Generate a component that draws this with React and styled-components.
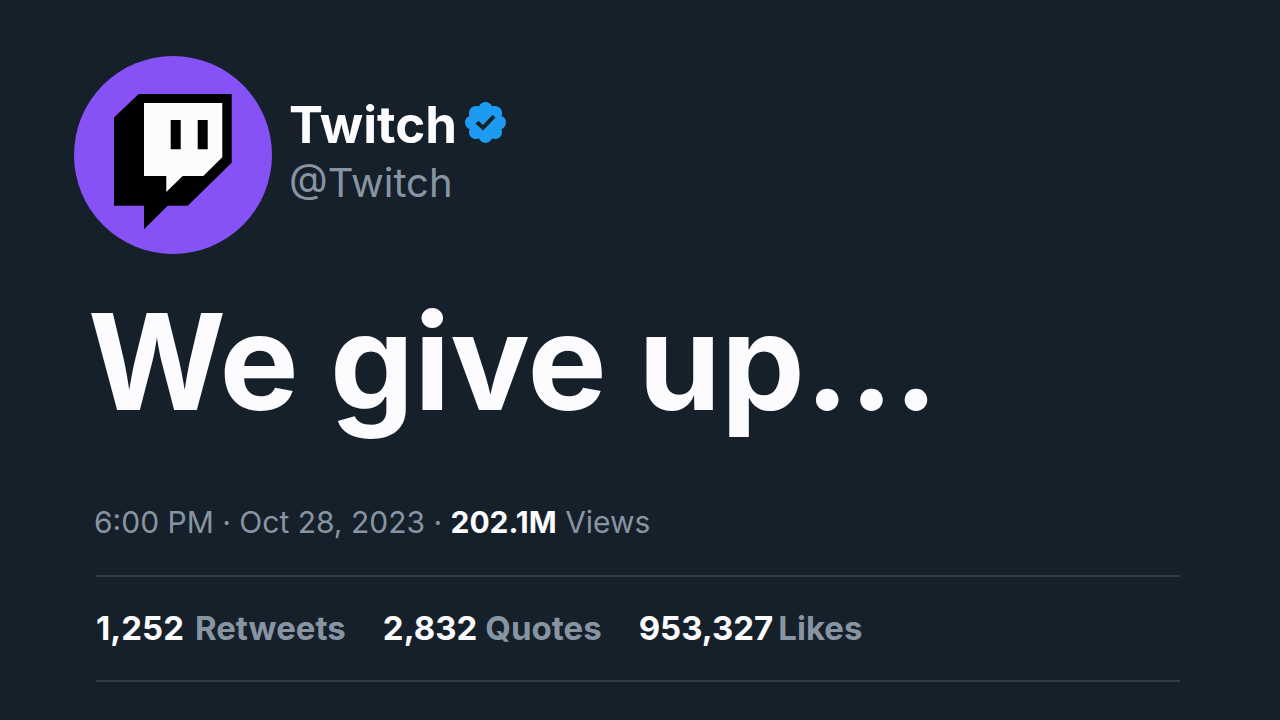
import styled, { createGlobalStyle } from "styled-components";

const GlobalStyle = createGlobalStyle`
    * {
        box-sizing: border-box;
    }
    body {
        margin: 0;
        background-color: #16202a;
        font-family: Inter, "Liberation Sans", sans-serif;
    }
`;

const Tweet = styled.article`
    display: flex;
    flex-direction: column;
    min-height: 100vh;
    padding: 56px 100px 38px 74px;
    color: #fcfbfe;
`;

const Header = styled.header`
    display: flex;
    align-items: flex-start;
    gap: 17px;
`;

const Avatar = styled.svg`
    flex: none;
    width: 198px;
    height: 198px;
`;

const Author = styled.div`
    display: flex;
    flex-direction: column;
    padding-top: 39px;
`;

const NameRow = styled.div`
    display: flex;
    align-items: center;
    gap: 8px;
`;

const Name = styled.h1`
    margin: 0;
    font-size: 51px;
    line-height: 60px;
    font-weight: 700;
`;

const Badge = styled.svg`
    width: 41px;
    height: 41px;
    margin-bottom: 6px;
    fill: #1d9bf0;
`;

const Handle = styled.a`
    font-size: 40px;
    line-height: 56px;
    color: #8795a3;
    text-decoration: none;
`;

const Message = styled.p`
    margin: 26px 0 0 14px;
    font-size: 133px;
    line-height: 164px;
    font-weight: 700;
`;

const Meta = styled.p`
    margin: 60px 0 0 20px;
    font-size: 30px;
    line-height: 36px;
    color: #8795a3;
    strong {
        font-weight: 700;
        color: #fcfbfe;
    }
`;

const Stats = styled.div`
    display: flex;
    align-items: center;
    gap: 37px;
    height: 107px;
    margin: 35px 0 0 22px;
    padding-bottom: 2px;
    border-top: 2px solid #2f3d47;
    border-bottom: 2px solid #2f3d47;
`;

const Stat = styled.div`
    display: flex;
    gap: ${(props) => props.$gap};
    font-size: 33px;
    line-height: 40px;
    font-weight: 700;
    span {
        color: #8795a3;
    }
`;

const stats = [
    { count: "1,252", label: "Retweets", gap: "11px" },
    { count: "2,832", label: "Quotes", gap: "8px" },
    { count: "953,327", label: "Likes", gap: "5px" },
];

function TwitchAvatar() {
    return (
        <Avatar viewBox="0 0 198 198" role="img" aria-label="Twitch">
            <circle cx="99" cy="99" r="99" fill="#8752f5" />
            <path d="M40 61.5 64.7 38h93v68.7l-44 43h-20L70 173.3v-23.6H40z" fill="#000" />
            <path d="M70 47h78.3v54.3l-19 18.7h-20.6l-16.4 16v-16H70z" fill="#fcfcff" />
            <path d="M96.7 64h10v29.3h-10zM123.7 64h10v29.3h-10z" fill="#000" />
        </Avatar>
    );
}

function VerifiedBadge() {
    return (
        <Badge viewBox="1.75 1.75 20.5 20.5" role="img" aria-label="Verified">
            <path d="M22.25 12c0-1.43-.88-2.67-2.19-3.34.46-1.39.2-2.9-.81-3.91s-2.52-1.27-3.91-.81c-.66-1.31-1.91-2.19-3.34-2.19s-2.67.88-3.33 2.19c-1.4-.46-2.91-.2-3.92.81s-1.26 2.52-.8 3.91c-1.31.67-2.2 1.91-2.2 3.34s.89 2.67 2.2 3.34c-.46 1.39-.21 2.9.8 3.91s2.52 1.26 3.91.81c.67 1.31 1.91 2.19 3.34 2.19s2.68-.88 3.34-2.19c1.39.45 2.9.2 3.91-.81s1.27-2.52.81-3.91c1.31-.67 2.19-1.91 2.19-3.34z" />
            <path d="M10.8 16 7 12.5l1.4-1.4 2.3 2.1 4.9-5.1 1.4 1.4z" fill="#16202a" />
        </Badge>
    );
}

export default function App() {
    return (
        <>
            <GlobalStyle />
            <Tweet>
                <Header>
                    <TwitchAvatar />
                    <Author>
                        <NameRow>
                            <Name>Twitch</Name>
                            <VerifiedBadge />
                        </NameRow>
                        <Handle href="#">@Twitch</Handle>
                    </Author>
                </Header>
                <Message>We give up...</Message>
                <Meta>
                    6:00 PM · Oct 28, 2023 · <strong>202.1M</strong> Views
                </Meta>
                <Stats>
                    {stats.map((stat) => (
                        <Stat key={stat.label} $gap={stat.gap}>
                            {stat.count}
                            <span>{stat.label}</span>
                        </Stat>
                    ))}
                </Stats>
            </Tweet>
        </>
    );
}
